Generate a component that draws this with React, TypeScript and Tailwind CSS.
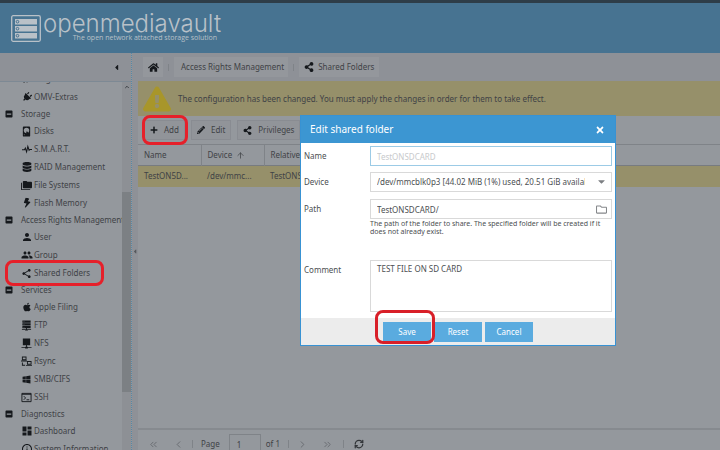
import type { ReactNode } from 'react';
import {
  FaApple,
  FaBolt,
  FaCaretDown,
  FaCaretLeft,
  FaDatabase,
  FaExclamationTriangle,
  FaHome,
  FaMinusSquare,
  FaPencilAlt,
  FaPlug,
  FaPlus,
  FaRegFolder,
  FaShareAlt,
  FaTimes,
  FaWindows,
} from 'react-icons/fa';
import { MdDashboard, MdGroup, MdInfoOutline, MdPerson, MdShare } from 'react-icons/md';
import { ArrowUp, ChevronLeft, ChevronRight, ChevronsLeft, ChevronsRight, ChevronUp, RefreshCw } from 'lucide-react';

interface TreeItem {
  label: string;
  icon: ReactNode;
  marked?: boolean;
}

interface TreeGroup {
  label: string;
  items: TreeItem[];
}

function Glyph({ d }: { d: string }) {
  return (
    <svg viewBox="0 0 24 24" fill="currentColor" className="size-[11px]">
      <path d={d} fillRule="evenodd" />
    </svg>
  );
}

const diskPath =
  'M6,1H18A2,2 0 0,1 20,3V21A2,2 0 0,1 18,23H6A2,2 0 0,1 4,21V3A2,2 0 0,1 6,1M12,4A6,6 0 0,0 6,10C6,13.31 8.69,16 12.1,16L11.22,13.77C10.95,13.29 11.11,12.68 11.59,12.4L12.45,11.9C12.93,11.63 13.54,11.79 13.82,12.27L15.74,14.69C17.12,13.59 18,11.9 18,10A6,6 0 0,0 12,4M7,18A1,1 0 0,0 6,19A1,1 0 0,0 7,20A1,1 0 0,0 8,19A1,1 0 0,0 7,18Z';
const foldersPath =
  'M22,4H14L12,2H6A2,2 0 0,0 4,4V16A2,2 0 0,0 6,18H22A2,2 0 0,0 24,16V6A2,2 0 0,0 22,4M2,6H0V20A2,2 0 0,0 2,22H20V20H2V6Z';
const ftpPath =
  'M3,1H21V6H3ZM5,3V4H8V3ZM3,7H21V12H3ZM5,9V10H8V9ZM3,13H21V18H3ZM5,15V16H8V15ZM11,18H13V20H22V22H15V23H9V22H2V20H11Z';
const nfsPath = 'M4,1H20V16H13V19H15V20H23V22H15V23H9V22H1V20H9V19H11V16H4Z';
const rsyncPath =
  'M2,1H12V9H2ZM4,3V7H10V3ZM0,10H13V12H0ZM13,11H23V19H13ZM15,13V17H21V13ZM11,20H24V22H11ZM2,14H4V19H9V21H2Z';

const groups: TreeGroup[] = [
  {
    label: 'Storage',
    items: [
      { label: 'Disks', icon: <Glyph d={diskPath} /> },
      {
        label: 'S.M.A.R.T.',
        icon: (
          <svg viewBox="0 0 24 24" fill="none" stroke="currentColor" strokeWidth="2.5" className="size-[10px]">
            <path d="M0 14h6l2-4 3 9 3-13 3 9 2-2h5" />
          </svg>
        ),
      },
      { label: 'RAID Management', icon: <FaDatabase className="size-[10px]" /> },
      { label: 'File Systems', icon: <Glyph d={foldersPath} /> },
      { label: 'Flash Memory', icon: <FaBolt className="size-[10px] rotate-12" /> },
    ],
  },
  {
    label: 'Access Rights Management',
    items: [
      { label: 'User', icon: <MdPerson className="size-3" /> },
      { label: 'Group', icon: <MdGroup className="size-3" /> },
      { label: 'Shared Folders', icon: <MdShare className="size-[11px]" />, marked: true },
    ],
  },
  {
    label: 'Services',
    items: [
      { label: 'Apple Filing', icon: <FaApple className="size-[10px]" /> },
      { label: 'FTP', icon: <Glyph d={ftpPath} /> },
      { label: 'NFS', icon: <Glyph d={nfsPath} /> },
      { label: 'Rsync', icon: <Glyph d={rsyncPath} /> },
      { label: 'SMB/CIFS', icon: <FaWindows className="size-[9px]" /> },
      {
        label: 'SSH',
        icon: (
          <svg viewBox="0 0 24 24" fill="none" stroke="currentColor" strokeWidth="2" className="size-[11px]">
            <path d="M2 3h20v18H2zM2 5h20M6 9l4 4-4 4M12 17h6" />
          </svg>
        ),
      },
    ],
  },
  {
    label: 'Diagnostics',
    items: [
      { label: 'Dashboard', icon: <MdDashboard className="size-3" /> },
      { label: 'System Information', icon: <MdInfoOutline className="size-3" /> },
    ],
  },
];

function TreeRow({ label, icon, marked }: TreeItem) {
  return (
    <li className="relative h-[18px]">
      <a href="#" className="flex h-full items-center pl-5 whitespace-nowrap">
        <span className="flex w-[14px] shrink-0 justify-center pr-px text-[#15181c]">{icon}</span>
        {label}
      </a>
      {marked && <span className="absolute -inset-y-1 left-[5px] w-[99px] rounded-lg border-[3px] border-[#e6202a]" />}
    </li>
  );
}

function ToolbarButton({ icon, children, marked }: { icon: ReactNode; children: ReactNode; marked?: boolean }) {
  return (
    <button
      type="button"
      className="relative flex h-5 shrink-0 items-center gap-[6px] border border-[#898c92] bg-[#919499] px-[5px]"
    >
      <span className="text-[#15181c]">{icon}</span>
      {children}
      {marked && (
        <span className="absolute -inset-y-[6px] -right-1 -left-[3px] rounded-lg border-[3px] border-[#e6202a]" />
      )}
    </button>
  );
}

function Logo() {
  return (
    <div className="flex items-center pl-[11px] text-[#b9c1c8]">
      <svg viewBox="0 0 30 27" fill="none" stroke="currentColor" className="h-[27px] w-[30px]">
        <rect x="0.7" y="0.7" width="28.6" height="25.6" rx="1.5" strokeWidth="1.3" />
        <g fill="currentColor" stroke="none">
          <rect x="4" y="4" width="22" height="5.5" />
          <rect x="4" y="11" width="22" height="5.5" />
          <rect x="4" y="18" width="22" height="5.5" />
        </g>
        <g stroke="#46718f" strokeWidth="1">
          <circle cx="6.5" cy="6.7" r="1.3" />
          <circle cx="6.5" cy="13.7" r="1.3" />
          <circle cx="6.5" cy="20.7" r="1.3" />
        </g>
      </svg>
      <div className="flex flex-col pl-[2px]">
        <span className="font-['Inter',sans-serif] text-[24px] leading-5 font-light">openmediavault</span>
        <span className="pr-1 text-right font-['Open_Sans',sans-serif] text-[7px] leading-2">
          The open network attached storage solution
        </span>
      </div>
    </div>
  );
}

function Sidebar() {
  return (
    <aside className="flex w-[132px] shrink-0 flex-col border-r border-dotted border-[#5588a6]">
      <div className="flex h-7 shrink-0 items-center justify-end bg-[#8e9197] pr-[10px] text-[#15181c]">
        <FaCaretLeft className="size-[9px]" />
      </div>
      <div className="flex min-h-0 flex-1 border-t border-[#7d8994]">
        <nav className="min-w-0 flex-1 overflow-hidden">
          <ul className="-mt-3">
            <TreeRow label="Plugins" icon={<FaPlug className="size-[10px] rotate-45" />} />
            <TreeRow label="OMV-Extras" icon={<FaPlug className="size-[10px] rotate-45" />} />
          </ul>
          {groups.map((group) => (
            <section key={group.label}>
              <h2 className="flex h-4 items-center gap-2 pl-[5px] whitespace-nowrap">
                <FaMinusSquare className="size-2 shrink-0 text-[#15181c]" />
                {group.label}
              </h2>
              <ul>
                {group.items.map((item) => (
                  <TreeRow key={item.label} {...item} />
                ))}
              </ul>
            </section>
          ))}
        </nav>
        <div className="flex w-[9px] shrink-0 flex-col items-center bg-[#8d9095] text-[#3c4045]">
          <ChevronUp className="my-[2px] size-[6px] shrink-0" strokeWidth={4} />
          <div className="mt-[100px] h-[200px] w-full shrink-0 bg-[#7c8084]" />
        </div>
      </div>
    </aside>
  );
}

function Breadcrumbs() {
  return (
    <nav className="flex h-7 shrink-0 items-center gap-[5px] bg-[#8e9197] pl-[5px]">
      <a href="#" aria-label="Home" className="flex h-5 w-5 items-center justify-center bg-[#94979c] text-[#15181c]">
        <FaHome className="size-[11px]" />
      </a>
      <span className="h-[7px] border-l border-[#7f8388]" />
      <a href="#" className="flex h-5 items-center bg-[#94979c] pr-1 pl-[7px]">
        Access Rights Management
      </a>
      <span className="h-[7px] border-l border-[#7f8388]" />
      <a href="#" className="flex h-5 items-center gap-1 bg-[#94979c] px-[5px]">
        <FaShareAlt className="size-[10px] text-[#15181c]" />
        Shared Folders
      </a>
    </nav>
  );
}

function FolderTable() {
  return (
    <table className="w-full table-fixed border-t border-[#7f8388] text-left">
      <thead>
        <tr className="h-[21px] border-b border-[#777b80]">
          <th className="w-[63px] border-r border-[#7f8388] pl-[6px] font-normal">Name</th>
          <th className="w-[63px] border-r border-[#7f8388] pl-[6px] font-normal">
            <span className="flex items-center gap-1">
              Device
              <ArrowUp className="size-[9px]" />
            </span>
          </th>
          <th className="pl-[6px] font-normal">Relative Path</th>
        </tr>
      </thead>
      <tbody>
        <tr className="h-[21px] bg-[#96906a]">
          <td className="pl-[6px] whitespace-nowrap">TestON5D...</td>
          <td className="pl-[6px] whitespace-nowrap">/dev/mmc...</td>
          <td className="pl-[6px] whitespace-nowrap">TestONSDCARD/</td>
        </tr>
      </tbody>
    </table>
  );
}

function PagingBar() {
  return (
    <footer className="h-[22px] shrink-0 border-t-2 border-[#868a8f]">
      <div className="flex h-7 items-center pl-[10px] text-[#66696e]">
        <button type="button" aria-label="First page">
          <ChevronsLeft className="size-[11px]" strokeWidth={2} />
        </button>
        <button type="button" aria-label="Previous page" className="ml-[14px]">
          <ChevronLeft className="size-[11px]" strokeWidth={2} />
        </button>
        <span className="mx-2 h-2 border-l border-[#7f8388]" />
        <label className="flex items-center gap-[9px] text-[#3f4246]">
          Page
          <input defaultValue="1" className="h-5 w-8 border border-[#7f8388] px-[7px]" />
        </label>
        <span className="ml-[5px] text-[#3f4246]">of 1</span>
        <span className="mx-2 h-2 border-l border-[#7f8388]" />
        <button type="button" aria-label="Next page">
          <ChevronRight className="size-[11px]" strokeWidth={2} />
        </button>
        <button type="button" aria-label="Last page" className="ml-[14px]">
          <ChevronsRight className="size-[11px]" strokeWidth={2} />
        </button>
        <span className="mx-[10px] h-2 border-l border-[#7f8388]" />
        <button type="button" aria-label="Refresh" className="text-[#33363a]">
          <RefreshCw className="size-[10px]" strokeWidth={3} />
        </button>
      </div>
    </footer>
  );
}

function Field({ id, label, children }: { id: string; label: string; children: ReactNode }) {
  return (
    <div className="flex">
      <label htmlFor={id} className="flex h-5 w-[66px] shrink-0 items-center">
        {label}
      </label>
      <div className="min-w-0 flex-1">{children}</div>
    </div>
  );
}

function EditDialog() {
  return (
    <form
      role="dialog"
      aria-label="Edit shared folder"
      className="absolute top-[115px] left-[300px] w-[316px] border border-[#3892d3] bg-white text-[8px] text-[#4c4f52]"
    >
      <header className="flex h-[27px] items-center justify-between bg-[#3c96d2] pr-[10px] pl-[9px] text-white">
        <h1 className="text-[10px]">Edit shared folder</h1>
        <button type="button" aria-label="Close">
          <FaTimes className="size-[10px]" />
        </button>
      </header>
      <div className="px-[3px] pt-[3px] pb-[6px]">
        <Field id="name" label="Name">
          <input
            id="name"
            defaultValue="TestONSDCARD"
            className="block h-5 w-full border border-[#9ccbe6] px-[6px] text-[#c8cacc]"
          />
        </Field>
        <div className="mt-[6px]">
          <Field id="device" label="Device">
            <div className="relative">
              <select id="device" className="block h-5 w-full appearance-none border border-[#d9d9d9] pr-[26px] pl-[6px]">
                <option>/dev/mmcblk0p3 [44.02 MiB (1%) used, 20.51 GiB available]</option>
              </select>
              <FaCaretDown className="pointer-events-none absolute top-1 right-[5px] size-[11px] text-[#7c7f82]" />
            </div>
          </Field>
        </div>
        <div className="mt-[7px]">
          <Field id="path" label="Path">
            <div className="flex h-5 items-center border border-[#d9d9d9] pr-1">
              <input id="path" defaultValue="TestONSDCARD/" className="h-full min-w-0 flex-1 px-[6px]" />
              <FaRegFolder className="size-[11px] text-[#85888b]" />
            </div>
            <p className="pt-[1px] text-[7px] leading-2">
              The path of the folder to share. The specified folder will be created if it does not already exist.
            </p>
          </Field>
        </div>
        <div className="mt-6">
          <Field id="comment" label="Comment">
            <textarea
              id="comment"
              defaultValue="TEST FILE ON SD CARD"
              className="block h-[52px] w-full resize-none border border-[#d9d9d9] px-[6px] py-[3px] leading-[10px]"
            />
          </Field>
        </div>
      </div>
      <footer className="flex h-[27px] items-center justify-center gap-[3px] bg-[#ececec] text-white">
        <button type="button" className="relative h-5 w-12 bg-[#5aabdf]">
          Save
          <span className="absolute -top-3 -right-1 -bottom-[2px] -left-2 rounded-lg border-[3px] border-[#d81f28]" />
        </button>
        <button type="button" className="h-5 w-12 bg-[#5aabdf]">
          Reset
        </button>
        <button type="button" className="h-5 w-12 bg-[#5aabdf]">
          Cancel
        </button>
      </footer>
    </form>
  );
}

export default function App() {
  return (
    <div className="relative flex h-screen flex-col overflow-hidden bg-[#94989d] font-['Noto_Sans',sans-serif] text-[8px] text-[#3f4246]">
      <header className="flex h-[53px] shrink-0 items-center border-t-[3px] border-[#2e3d48] bg-[#477391]">
        <Logo />
      </header>
      <div className="flex min-h-0 flex-1">
        <Sidebar />
        <div className="flex w-[6px] shrink-0 items-center bg-[#8e9197] text-[#55585c]">
          <FaCaretLeft className="size-[7px]" />
        </div>
        <main className="flex min-w-0 flex-1 flex-col">
          <Breadcrumbs />
          <div className="flex h-[35px] shrink-0 items-center gap-[7px] bg-[#96906a] pl-[5px]">
            <FaExclamationTriangle className="size-7 text-[#a8962a]" />
            The configuration has been changed. You must apply the changes in order for them to take effect.
          </div>
          <div className="flex h-7 shrink-0 items-center gap-[6px] pl-[6px]">
            <ToolbarButton icon={<FaPlus className="size-2" />} marked>
              Add
            </ToolbarButton>
            <ToolbarButton icon={<FaPencilAlt className="size-2" />}>Edit</ToolbarButton>
            <ToolbarButton icon={<FaShareAlt className="size-[9px]" />}>Privileges</ToolbarButton>
          </div>
          <div className="flex-1">
            <FolderTable />
          </div>
          <PagingBar />
        </main>
      </div>
      <EditDialog />
    </div>
  );
}
